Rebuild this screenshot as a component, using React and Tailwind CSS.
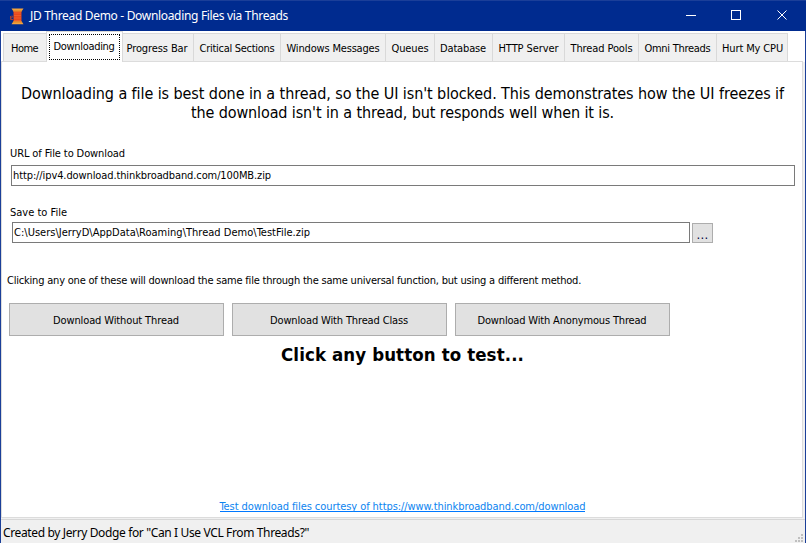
import { useLayoutEffect, useRef } from "react";

const TAHOMA = "font-['DejaVu_Sans_Condensed','DejaVu_Sans',sans-serif] [font-stretch:condensed]";
const SEGOE = "font-['Noto_Sans','Open_Sans',sans-serif]";

// Single line of text tracked so that it fills the given width.
function Fit({ w, className = "", children }) {
  const ref = useRef(null);
  useLayoutEffect(() => {
    const el = ref.current;
    el.style.letterSpacing = "0px";
    const natural = el.getBoundingClientRect().width;
    el.style.letterSpacing = (w - natural) / children.length + "px";
  }, [w, children]);
  return (
    <span ref={ref} className={"inline-block shrink-0 whitespace-pre " + className}>
      {children}
    </span>
  );
}

const tabs = [
  { label: "Home", w: 27, box: "w-[44px] pr-px" },
  { label: "Downloading", w: 61, box: "w-[77px]", active: true },
  { label: "Progress Bar", w: 61, box: "w-[71px] pr-[2px]" },
  { label: "Critical Sections", w: 75, box: "w-[87px]" },
  { label: "Windows Messages", w: 93, box: "w-[105px]" },
  { label: "Queues", w: 37, box: "w-[49px]" },
  { label: "Database", w: 46, box: "w-[58px] pr-px" },
  { label: "HTTP Server", w: 60, box: "w-[72px]" },
  { label: "Thread Pools", w: 62, box: "w-[74px]" },
  { label: "Omni Threads", w: 66, box: "w-[78px]" },
  { label: "Hurt My CPU", w: 61, box: "w-[71px] pl-px" },
];

function SpoolIcon() {
  return (
    <svg width="16" height="17" viewBox="0 0 16 17">
      <path d="M4 8.5H3.500M3 7.500v2.500H1.500V8M1.500 10v1.500H4" fill="none" stroke="#a5402f" />
      <path d="M4.5 3h8v11h-8z" fill="#e8481c" />
      <path d="M5 5h7M5 7.500h7M5 10h7M5 12.500h7" stroke="#f4692f" strokeWidth=".7" />
      <path d="M2.500 .500h12l-2 3h-8z" fill="#f5a33b" />
      <path d="M2.500 16.300h12l-2-3h-8z" fill="#f5a33b" />
      <path d="M4 3h9M4 14h9" stroke="#cf7320" strokeWidth=".7" />
    </svg>
  );
}

function TitleBar() {
  return (
    <header className="flex h-[31px] shrink-0 items-center border-t border-[#1b3f99] bg-[#002b8f] pl-[9px] text-white">
      <SpoolIcon />
      <Fit w={258} className={SEGOE + " ml-[5px] text-[12px] leading-[30px]"}>
        JD Thread Demo - Downloading Files via Threads
      </Fit>
      <svg className="mb-[2px] ml-auto mr-[16px]" width="104" height="12" viewBox="0 0 104 12" fill="none" stroke="#fff">
        <path d="M0 6.500h10" />
        <rect x="45.500" y="1.500" width="9" height="9" />
        <path d="M91.500 1.500l9 9M100.500 1.500l-9 9" />
      </svg>
    </header>
  );
}

function Tab({ label, w, box, active }) {
  if (active) {
    return (
      <div className={box + " relative z-10 -ml-px -mt-[2px] flex h-[31px] border-x border-t border-[#d9d9d9] bg-white p-[2px]"}>
        <div className="flex flex-1 justify-center border border-dotted border-black pr-px">
          <Fit w={w} className="leading-[24px]">{label}</Fit>
        </div>
      </div>
    );
  }
  return (
    <div className={box + " flex h-[29px] justify-center border-r border-t border-[#d9d9d9] bg-[#f0f0f0] first:border-l"}>
      <Fit w={w} className="leading-[29px]">{label}</Fit>
    </div>
  );
}

function Button({ w, children }) {
  return (
    <button className="flex h-[33px] w-[215px] items-center justify-center border border-[#adadad] bg-[#e1e1e1] pr-px pt-[2px]">
      <Fit w={w}>{children}</Fit>
    </button>
  );
}

export default function App() {
  return (
    <div className={TAHOMA + " flex h-[543px] w-[806px] flex-col overflow-hidden bg-white text-[11px] leading-[14px] text-black"}>
      <TitleBar />
      <div className="flex flex-1 flex-col border-x border-b border-[#1b3f99]">
        <nav className="flex h-[31px] shrink-0 pl-[2px] pt-[2px]">
          {tabs.map((t) => (
            <Tab key={t.label} {...t} />
          ))}
        </nav>
        <div className="flex h-[457px] shrink-0 bg-[#f0f0f0]">
          <main className="-mt-px flex h-[457px] w-[802px] flex-col border border-[#dcdcdc] bg-white">
            <div className="flex flex-col items-center pl-px pt-[22px] text-[16px] leading-[19px]">
              <Fit w={763}>Downloading a file is best done in a thread, so the UI isn't blocked. This demonstrates how the UI freezes if</Fit>
              <Fit w={423}>the download isn't in a thread, but responds well when it is.</Fit>
            </div>
            <div className="mt-[25px] pl-[8px]"><Fit w={115}>URL of File to Download</Fit></div>
            <div className="ml-[9px] mt-[4px] flex h-[21px] w-[784px] items-center border border-[#7a7a7a] pl-[1px]">
              <Fit w={258}>http://ipv4.download.thinkbroadband.com/100MB.zip</Fit>
            </div>
            <div className="mt-[20px] pl-[8px]"><Fit w={57}>Save to File</Fit></div>
            <div className="ml-[10px] mt-[2px] flex h-[21px] gap-[2px]">
              <div className="flex w-[678px] items-center border border-[#7a7a7a] pl-[1px]">
                <Fit w={296}>C:\Users\JerryD\AppData\Roaming\Thread Demo\TestFile.zip</Fit>
              </div>
              <button className="mt-px flex h-[20px] w-[21px] justify-center border border-[#adadad] bg-[#e1e1e1] text-[13px] leading-[22px] text-[#000040]">
                <Fit w={12}>...</Fit>
              </button>
            </div>
            <div className="mt-[31px] pl-[5px]"><Fit w={574}>Clicking any one of these will download the same file through the same universal function, but using a different method.</Fit></div>
            <div className="ml-[7px] mt-[15px] flex gap-[8px]">
              <Button w={126}>Download Without Thread</Button>
              <Button w={138}>Download With Thread Class</Button>
              <Button w={169}>Download With Anonymous Thread</Button>
            </div>
            <div className="mt-[7px] flex justify-center pl-px text-[18.5px] font-bold leading-[23px]">
              <Fit w={243}>Click any button to test...</Fit>
            </div>
            <div className="mb-[5px] mt-auto flex justify-center pl-px text-[#0c84f0]">
              <a className="flex h-[12px] border-b border-[#0078ff]"><Fit w={366} className="leading-[13px]">Test download files courtesy of https://www.thinkbroadband.com/download</Fit></a>
            </div>
          </main>
        </div>
        <footer className="flex flex-1 items-center justify-between border-t border-[#d7d7d7] bg-[#f0f0f0] pl-[2px]">
          <Fit w={306} className={SEGOE + " pt-[2px] text-[12px] leading-[22px]"}>Created by Jerry Dodge for "Can I Use VCL From Threads?"</Fit>
          <svg className="mr-px self-end" width="9" height="10" fill="#bfbfbf">
            <path d="M6 0h2v2h-2zM3 3h2v2h-2zM6 3h2v2h-2zM0 6h2v2h-2zM3 6h2v2h-2zM6 6h2v2h-2z" />
          </svg>
        </footer>
      </div>
    </div>
  );
}
